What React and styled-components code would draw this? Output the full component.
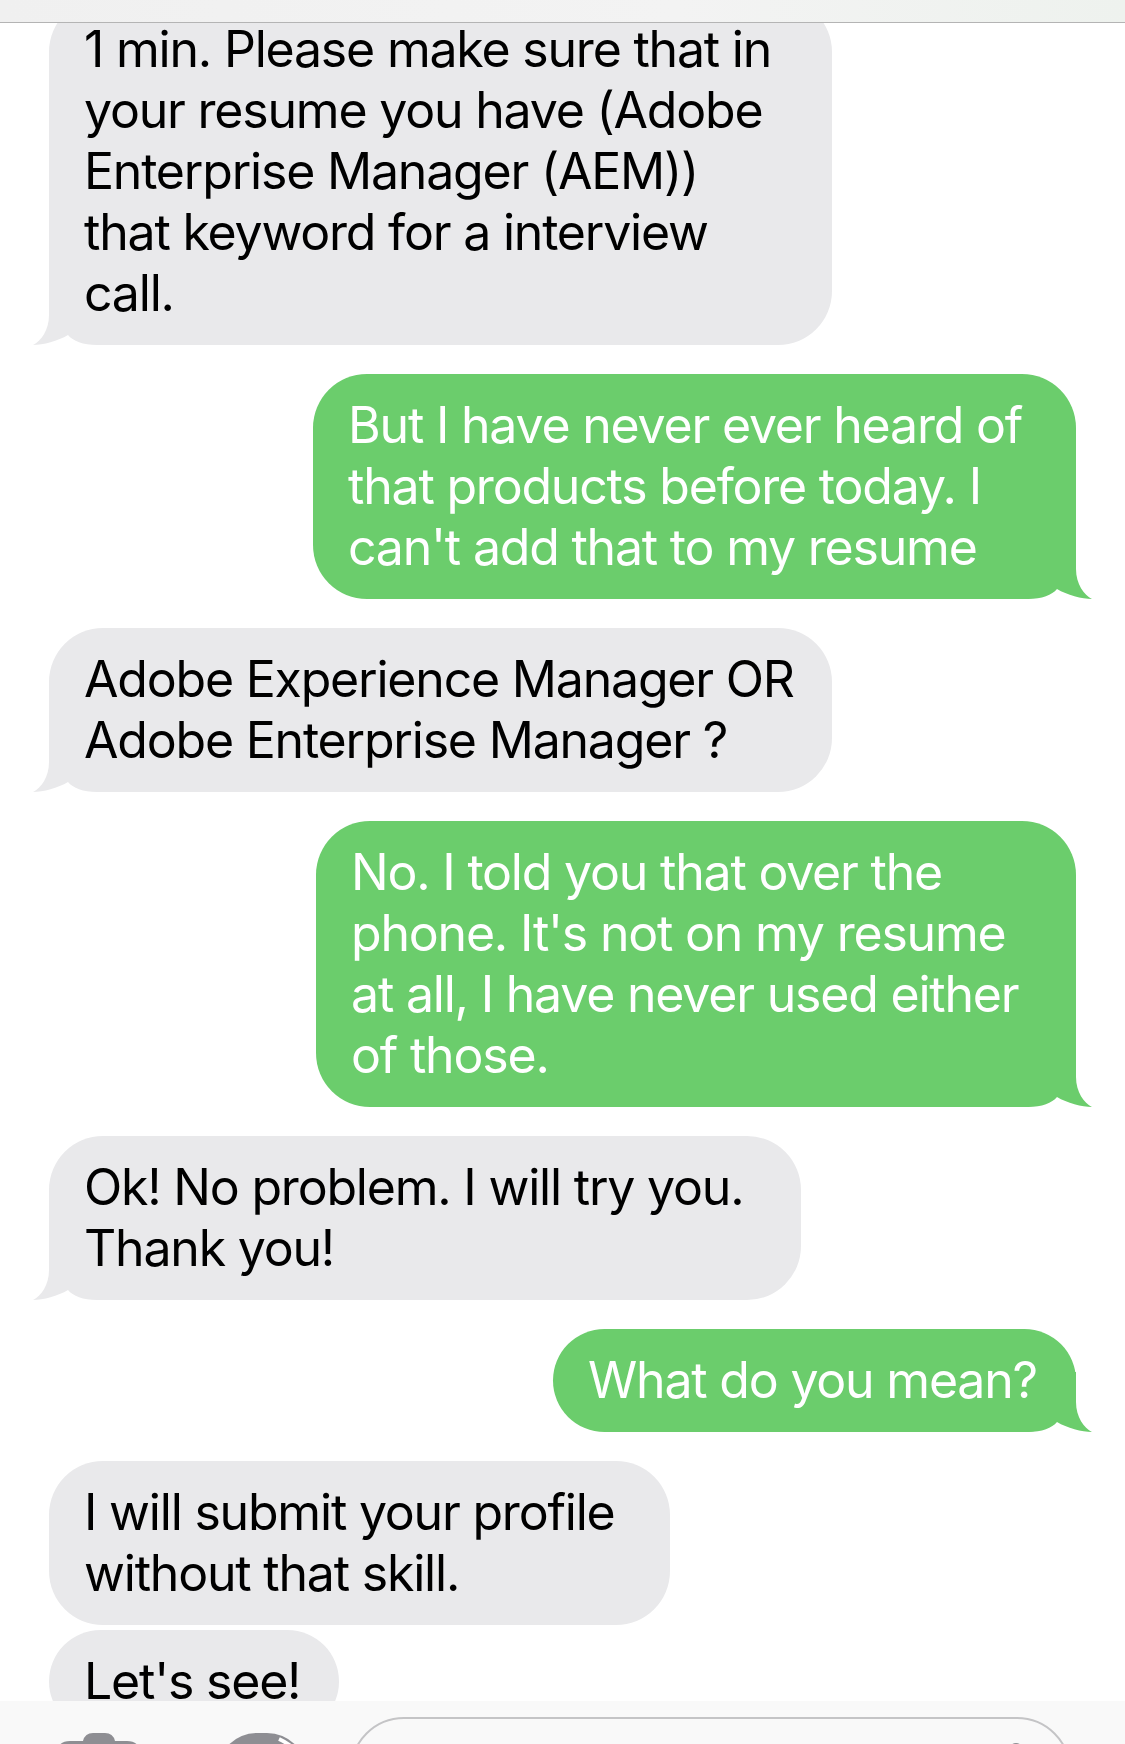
import React from "react";
import styled, { createGlobalStyle } from "styled-components";

const GRAY = "#e9e9eb";
const GREEN = "#6bcd6c";

const GlobalStyle = createGlobalStyle`
  html, body {
    margin: 0;
    padding: 0;
    background: #fff;
  }
  body {
    font-family: Inter, "Noto Sans", sans-serif;
    -webkit-font-smoothing: antialiased;
  }
`;

const messages = [
  {
    me: false,
    w: 783,
    tail: true,
    lines: [
      "1 min. Please make sure that in",
      "your resume you have (Adobe",
      "Enterprise Manager (AEM))",
      "that keyword for a interview",
      "call.",
    ],
  },
  {
    me: true,
    w: 763,
    tail: true,
    lines: [
      "But I have never ever heard of",
      "that products before today. I",
      "can't add that to my resume",
    ],
  },
  {
    me: false,
    w: 783,
    tail: true,
    lines: ["Adobe Experience Manager OR", "Adobe Enterprise Manager ?"],
  },
  {
    me: true,
    w: 760,
    tail: true,
    lines: [
      "No. I told you that over the",
      "phone. It's not on my resume",
      "at all, I have never used either",
      "of those.",
    ],
  },
  {
    me: false,
    w: 752,
    tail: true,
    lines: ["Ok! No problem. I will try you.", "Thank you!"],
  },
  { me: true, w: 523, tail: true, lines: ["What do you mean?"] },
  {
    me: false,
    w: 621,
    tail: false,
    lines: ["I will submit your profile", "without that skill."],
  },
  { me: false, w: 290, tail: false, tight: true, lines: ["Let's see!"] },
];

function Tail({ me }) {
  return (
    <TailSvg $me={me} viewBox="0 0 70 60">
      <path
        d="M0 60 C8 56 16 45 16 30 L16 0 L70 0 L70 60 L64 60 C50 60 40 56 35 50 C25 56 10 60 0 60 Z"
        fill={me ? GREEN : GRAY}
      />
    </TailSvg>
  );
}

function CameraIcon() {
  return (
    <IconSvg viewBox="0 0 83 66" width="83" height="66">
      <path
        d="M26 8 Q28 0 36 0 L48 0 Q56 0 58 8 L70 8 Q83 8 83 21 L83 54 Q83 66 70 66 L13 66 Q0 66 0 54 L0 21 Q0 8 13 8 Z"
        fill="#8e8e93"
      />
    </IconSvg>
  );
}

function StoreIcon() {
  return (
    <StoreSvg viewBox="0 0 90 90" width="90" height="90">
      <rect x="0" y="0" width="90" height="90" rx="40" fill="#8e8e93" />
      <path d="M62 6 Q80 14 86 30" stroke="#fff" strokeWidth="4" fill="none" />
    </StoreSvg>
  );
}

export default function App() {
  return (
    <Screen>
      <GlobalStyle />
      <Thread>
        {messages.map((m, i) => (
          <Bubble key={i} $me={m.me} $w={m.w} $tight={m.tight}>
            {m.tail && <Tail me={m.me} />}
            {m.lines.map((l, j) => (
              <Line key={j}>{l}</Line>
            ))}
          </Bubble>
        ))}
      </Thread>
      <TopBar />
      <InputBar>
        <CameraIcon />
        <StoreIcon />
        <Field>
          <MicDot />
        </Field>
      </InputBar>
    </Screen>
  );
}

const Screen = styled.div`
  position: relative;
  width: 1125px;
  height: 1744px;
  overflow: hidden;
  background: #fff;
`;

const Thread = styled.div`
  display: flex;
  flex-direction: column;
  padding: 0 49px;
  margin-top: -2px;
`;

const Bubble = styled.div`
  position: relative;
  box-sizing: border-box;
  align-self: ${(p) => (p.$me ? "flex-end" : "flex-start")};
  width: ${(p) => p.$w}px;
  margin-top: ${(p) => (p.$tight ? 5 : 29)}px;
  padding: 21px 0 21px 35px;
  border-radius: 54px;
  background: ${(p) => (p.$me ? GREEN : GRAY)};
  color: ${(p) => (p.$me ? "#fff" : "#000")};
  font-size: 50px;
  line-height: 61px;
  letter-spacing: -1.2px;
  white-space: nowrap;

  &:first-child {
    margin-top: 0;
  }
`;

const Line = styled.div`
  position: relative;
`;

const TailSvg = styled.svg`
  position: absolute;
  bottom: 0;
  width: 70px;
  height: 60px;
  ${(p) => (p.$me ? "right: -16px; transform: scaleX(-1);" : "left: -16px;")}
`;

const TopBar = styled.div`
  position: absolute;
  top: 0;
  left: 0;
  right: 0;
  height: 22px;
  background: linear-gradient(90deg, #f0f0f0, #f3f3f3 60%, #eef2ee);
  border-bottom: 1.5px solid #b4b4b4;
`;

const InputBar = styled.div`
  position: absolute;
  left: 0;
  right: 0;
  bottom: 0;
  height: 43px;
  background: rgba(249, 249, 249, 0.97);
  display: flex;
  align-items: flex-start;
  padding-left: 57px;
`;

const IconSvg = styled.svg`
  flex: none;
  margin-top: 32px;
`;

const StoreSvg = styled.svg`
  flex: none;
  margin-top: 32px;
  margin-left: 77px;
`;

const Field = styled.div`
  flex: 1;
  display: flex;
  justify-content: flex-end;
  box-sizing: border-box;
  height: 108px;
  margin: 16px 54px 0 43px;
  padding: 24px 46px 0 0;
  border: 2px solid #c4c4c6;
  border-radius: 54px;
`;

const MicDot = styled.div`
  width: 14px;
  height: 14px;
  border-radius: 50%;
  background: #8e8e93;
`;
